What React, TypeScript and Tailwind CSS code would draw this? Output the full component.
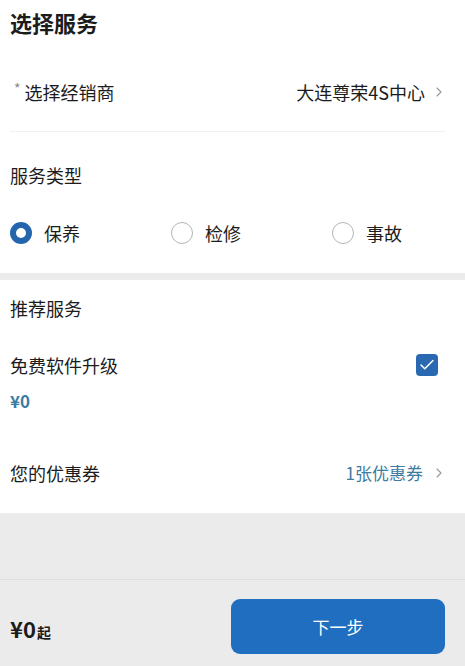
// 选择服务页面：经销商、服务类型、推荐服务、优惠券以及底部下一步按钮
import { useState } from "react";
import { ChevronRight, Check } from "lucide-react";

type ServiceType = "baoyang" | "jianxiu" | "shigu";

const TYPES: [ServiceType, string][] = [
  ["baoyang", "保养"],
  ["jianxiu", "检修"],
  ["shigu", "事故"],
];

export default function App() {
  const [type, setType] = useState<ServiceType>("baoyang");
  const [upgrade, setUpgrade] = useState(true);

  return (
    <div
      className="flex min-h-[666px] w-full flex-col bg-[#ebebeb] text-[#1c1c1c]"
      style={{ fontFamily: '"Noto Sans CJK SC", "Noto Sans", sans-serif' }}
    >
      <div className="bg-white">
        {/* 标题 */}
        <div className="flex h-[44px] items-center px-[10px]">
          <h1 className="text-[22px] font-bold leading-none">选择服务</h1>
        </div>

        {/* 经销商 */}
        <div className="flex h-[87px] items-center justify-between pl-[10px] pr-[18px] pt-[9px]">
          <div className="flex items-center text-[18px]">
            <span className="mr-[4px] mt-[-7px] pl-[4px] text-[14px] text-[#8a8a8a]">*</span>
            选择经销商
          </div>
          <div className="flex items-center gap-[6px] text-[18px]">
            大连尊荣4S中心
            <ChevronRight className="h-[16px] w-[16px] text-[#999]" strokeWidth={1.6} />
          </div>
        </div>
        <div className="ml-[10px] mr-[20px] h-px bg-[#f0f0f0]" />

        {/* 服务类型 */}
        <div className="flex h-[86px] items-center px-[10px] text-[18px]">服务类型</div>
        <div className="flex h-[30px] items-center px-[10px]">
          {TYPES.map(([key, label], i) => (
            <button
              key={key}
              onClick={() => setType(key)}
              className={`flex shrink-0 items-center gap-[12px] text-[18px] ${i < 2 ? "w-[161px]" : ""}`}
            >
              {type === key ? (
                <span className="h-[22px] w-[22px] rounded-full border-[6px] border-[#2466ad] bg-white" />
              ) : (
                <span className="h-[22px] w-[22px] rounded-full border-[1.5px] border-[#b5b5b5] bg-white" />
              )}
              {label}
            </button>
          ))}
        </div>
        <div className="h-[25px]" />
      </div>

      <div className="h-[7px] bg-[#ececec]" />

      {/* 推荐服务 */}
      <div className="bg-white pb-[28px] pl-[10px] pr-[18px]">
        <div className="flex h-[56px] items-center text-[18px]">推荐服务</div>
        <div className="mt-[17px] flex h-[24px] items-center justify-between">
          <span className="text-[18px]">免费软件升级</span>
          <button
            onClick={() => setUpgrade(!upgrade)}
            className={`mr-[9px] flex h-[22px] w-[22px] items-center justify-center rounded-[4px] ${
              upgrade ? "bg-[#2969b2]" : "border border-[#b5b5b5] bg-white"
            }`}
          >
            {upgrade && <Check className="h-[18px] w-[18px] text-white" strokeWidth={2} />}
          </button>
        </div>
        <div className="mt-[12px] flex h-[24px] items-center text-[17px] font-bold text-[#3b7ca6]">¥0</div>
        <div className="mt-[48px] flex h-[24px] items-center justify-between">
          <span className="text-[18px]">您的优惠券</span>
          <div className="flex items-center gap-[8px] text-[17px] text-[#3d7ca3]">
            1张优惠券
            <ChevronRight className="h-[16px] w-[16px] text-[#999]" strokeWidth={1.6} />
          </div>
        </div>
      </div>

      {/* 空白区域 */}
      <div className="h-[67px] border-b border-[#dedede] bg-[#ebebeb]" />

      {/* 底部栏 */}
      <div className="flex h-[85px] items-start justify-between bg-[#ebebeb] pl-[10px] pr-[20px] pt-[19px]">
        <div className="mt-[13px] flex items-baseline font-bold">
          <span className="text-[22px]">¥0</span>
          <span className="ml-[1px] text-[14px]">起</span>
        </div>
        <button className="flex h-[55px] w-[214px] items-center justify-center rounded-[9px] bg-[#1f6ebf] text-[17px] text-white">
          下一步
        </button>
      </div>
    </div>
  );
}
